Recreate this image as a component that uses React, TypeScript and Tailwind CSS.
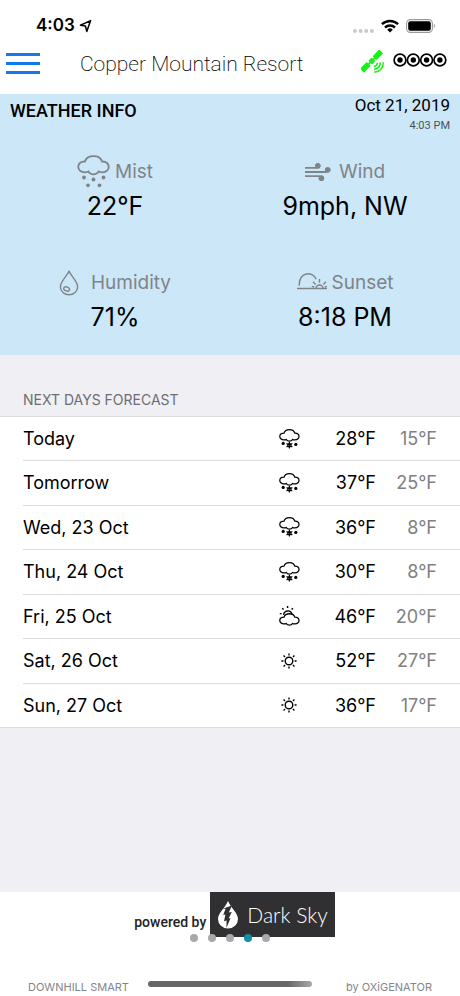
import type { ReactNode } from "react";

const CLOUD =
  "M8 6.5C10 -.6 23 -.6 25 6.5C34 6 34 17.4 25 17.3C23.5 17.3 22.5 17.2 21.5 16.6C19.5 20.2 13.5 20.2 11.5 16.6C10.5 17.2 9.5 17.3 8 17.3C-1 17.4 -1 6 8 6.5Z";

type Sky = "snow" | "partly" | "sun";

const forecast: { day: string; sky: Sky; high: number; low: number }[] = [
  { day: "Today", sky: "snow", high: 28, low: 15 },
  { day: "Tomorrow", sky: "snow", high: 37, low: 25 },
  { day: "Wed, 23 Oct", sky: "snow", high: 36, low: 8 },
  { day: "Thu, 24 Oct", sky: "snow", high: 30, low: 8 },
  { day: "Fri, 25 Oct", sky: "partly", high: 46, low: 20 },
  { day: "Sat, 26 Oct", sky: "sun", high: 52, low: 27 },
  { day: "Sun, 27 Oct", sky: "sun", high: 36, low: 17 },
];

function MistIcon() {
  return (
    <svg width="33" height="34" viewBox="0 0 33 34" fill="none">
      <path d={CLOUD} stroke="currentColor" strokeWidth="1.8" />
      <g fill="currentColor">
        <circle cx="7" cy="22.5" r="1.9" />
        <circle cx="16.5" cy="24.5" r="1.9" />
        <circle cx="26.5" cy="22.5" r="1.9" />
        <circle cx="11" cy="30.3" r="1.9" />
        <circle cx="22.5" cy="30.3" r="1.9" />
      </g>
    </svg>
  );
}

function WindIcon() {
  return (
    <svg width="29" height="18" viewBox="0 0 29 18" fill="none" stroke="currentColor" strokeWidth="1.8">
      <path d="M0 4.8H11.5Q14.5 4.8 14.8 2.5M0 9H20.5Q24.4 9 24.7 6.5M0 13.2H14.5Q17.8 13.2 18.3 15" />
      <g fill="currentColor" stroke="none">
        <circle cx="12.8" cy="2.8" r="2.8" />
        <circle cx="22.7" cy="6.7" r="2.8" />
        <circle cx="16.4" cy="15.2" r="2.8" />
      </g>
    </svg>
  );
}

function DropIcon() {
  return (
    <svg width="27" height="26" viewBox="0 0 27 26" fill="none" stroke="currentColor" strokeWidth="1.4">
      <path d="M10 1.4C7 7 1.4 11.5 1.4 16.8A8.6 8 0 0 0 18.6 16.8C18.6 11.5 13 7 10 1.4Z" />
      <ellipse cx="7.6" cy="19" rx="3" ry="1.9" transform="rotate(20 7.6 19)" />
    </svg>
  );
}

function SunsetIcon() {
  return (
    <svg width="30" height="20" viewBox="0 0 30 20" fill="none" stroke="currentColor" strokeWidth="1.4">
      <path d="M0 15.5H30M2.2 12.8C2 -1.8 15.5 -2 19.2 6.2" />
      <path d="M19 15.5a3.5 3.5 0 0 1 7 0M22.5 9.8V6M18.6 11.4L16 8.8M26.4 11.4L29 8.8M17.2 14L14.8 13.3M27.8 14L30 13.3" />
    </svg>
  );
}

function SkyIcon({ sky }: { sky: Sky }) {
  if (sky === "snow") {
    return (
      <svg className="mx-auto" width="21" height="20" viewBox="0 0 21 20" fill="none" stroke="currentColor" role="img" aria-label="Snow">
        <path d={CLOUD} transform="scale(.63)" strokeWidth="2" />
        <path d="M10.4 13V19.6M7.5 14.6L13.3 18M13.3 14.6L7.5 18" strokeWidth="1.2" />
        <circle cx="10.4" cy="16.3" r="1.7" strokeWidth="1.2" />
        <g fill="currentColor" stroke="none">
          <circle cx="4.2" cy="14.4" r="1.6" />
          <circle cx="16.8" cy="15.4" r="1.6" />
        </g>
      </svg>
    );
  }
  if (sky === "partly") {
    return (
      <svg className="mx-auto" width="21" height="20" viewBox="0 0 21 20" fill="none" stroke="currentColor" role="img" aria-label="Partly cloudy">
        <path d="M4.6 9A4.3 4.3 0 0 1 13 8" strokeWidth="1.3" />
        <path d="M8.6 0V2M3.2 2.2L4.6 3.6M14 2.2L12.6 3.6M.8 7.6H2.6" strokeWidth="1.4" />
        <path d={CLOUD} transform="translate(0 7) scale(.63)" strokeWidth="2.1" fill="white" />
      </svg>
    );
  }
  return (
    <svg className="mx-auto" width="16" height="16" viewBox="0 0 16 16" fill="none" stroke="currentColor" strokeWidth="1.4" role="img" aria-label="Sunny">
      <circle cx="8" cy="8" r="3.8" />
      <path d="M8 .4V2.4M8 13.6V15.6M.4 8H2.4M13.6 8H15.6M2.6 2.6L4 4M12 12L13.4 13.4M13.4 2.6L12 4M4 12L2.6 13.4" />
    </svg>
  );
}

function StatusBar() {
  return (
    <div className="flex h-[50px] items-center justify-between pt-[2px] pr-6 pl-9">
      <div className="flex items-center gap-1 text-[17px] font-semibold">
        4:03
        <svg width="13" height="14" viewBox="0 0 13 14" fill="none" stroke="currentColor" strokeWidth="1.5" strokeLinejoin="round">
          <path d="M11.6 1.6L1.4 6.2L6.4 7L7.8 12.4Z" />
        </svg>
      </div>
      <div className="flex items-center gap-[7px]">
        <svg width="21" height="14" viewBox="0 0 21 14" fill="#c9c9c9">
          <circle cx="2" cy="12" r="2" />
          <circle cx="7.6" cy="12" r="2" />
          <circle cx="13.2" cy="12" r="2" />
          <circle cx="18.8" cy="12" r="2" />
        </svg>
        <svg width="18" height="14" viewBox="0 0 18 14" fill="none" stroke="black" strokeWidth="2.5">
          <path d="M.9 5.2A11.8 11.8 0 0 1 17.1 5.2M4 8.5A7.3 7.3 0 0 1 14 8.5" />
          <path d="M9 13.5L6.2 10.7A4 4 0 0 1 11.8 10.7Z" fill="black" stroke="none" />
        </svg>
        <svg width="30" height="14" viewBox="0 0 30 14">
          <rect x=".6" y=".6" width="25.8" height="12.8" rx="3.8" fill="none" stroke="#9b9b9b" strokeWidth="1.1" />
          <rect x="2.2" y="2.2" width="22.6" height="9.6" rx="2" />
          <path d="M27.8 4.8Q30.4 7 27.8 9.2Z" fill="#9b9b9b" />
        </svg>
      </div>
    </div>
  );
}

function Header() {
  return (
    <header className="flex h-11 items-start pr-[13px] pl-1.5">
      <button type="button" aria-label="Menu" className="flex w-[34px] flex-col gap-[6px] pt-[3px]">
        <span className="h-[3px] w-full bg-[#1479ea]" />
        <span className="h-[3px] w-full bg-[#1479ea]" />
        <span className="h-[3px] w-full bg-[#1479ea]" />
      </button>
      <h1 className="flex-1 pl-10 font-[Roboto] text-[21px] leading-7 font-extralight whitespace-nowrap">Copper Mountain Resort</h1>
      <svg width="24" height="24" viewBox="0 0 24 24" className="mr-2" role="img" aria-label="GPS signal">
        <g fill="#12f512">
          <g transform="rotate(-45 11 11)">
            <rect x="-2.8" y="8" width="9.4" height="5.6" rx=".8" />
            <rect x="6" y="10" width="10" height="1.8" />
            <rect x="8.4" y="8.2" width="5" height="5.4" rx="1.6" />
            <rect x="14.8" y="8" width="9.4" height="5.6" rx=".8" />
          </g>
        </g>
        <g fill="none" stroke="#12f512" strokeWidth="1.5">
          <path d="M16.6 12.6Q16.2 16 12.8 16.4M19.4 12.4Q19 18.6 13 19.2M22.4 12.2Q22 21.4 13.2 22.2" />
        </g>
      </svg>
      <svg width="54" height="14" viewBox="0 0 54 14" className="mt-[3px]" role="img" aria-label="4 runs">
        {[7, 20.3, 33.6, 46.9].map((cx) => (
          <g key={cx}>
            <circle cx={cx} cy="7" r="5.9" fill="none" stroke="black" strokeWidth="1.7" />
            <circle cx={cx} cy="7" r="2.7" />
          </g>
        ))}
      </svg>
    </header>
  );
}

function Stat({ icon, label, value }: { icon: ReactNode; label: string; value: string }) {
  return (
    <div className="flex flex-col items-center">
      <dt className="flex h-9 items-center gap-[5px] text-[19px] text-[#808488]">
        {icon}
        {label}
      </dt>
      <dd className="text-[25px] leading-8">{value}</dd>
    </div>
  );
}

export default function App() {
  return (
    <div className="flex min-h-screen flex-col bg-white font-[Inter,sans-serif] text-black">
      <StatusBar />
      <Header />

      {/* Current conditions */}
      <section className="bg-[#cce7f8] pb-[22px]">
        <div className="flex justify-between px-2.5 font-[Roboto]">
          <h2 className="pt-[3px] text-[18px] leading-7 font-medium">WEATHER INFO</h2>
          <div className="text-right">
            <p className="text-[17px] leading-[22px]">Oct 21, 2019</p>
            <p className="pt-[2px] text-[11px] leading-4 text-[#4b5258]">4:03 PM</p>
          </div>
        </div>
        <dl className="grid grid-cols-2 gap-y-[43px] pt-5">
          <Stat icon={<MistIcon />} label="Mist" value="22°F" />
          <Stat icon={<WindIcon />} label="Wind" value="9mph, NW" />
          <Stat icon={<DropIcon />} label="Humidity" value="71%" />
          <Stat icon={<SunsetIcon />} label="Sunset" value="8:18 PM" />
        </dl>
      </section>

      {/* Forecast */}
      <section className="flex-1 bg-[#efeff4]">
        <h2 className="px-[23px] pt-9 pb-2 text-[14px] leading-[17px] text-[#6d6d72]">NEXT DAYS FORECAST</h2>
        <div className="border-y border-[#dcdce0] bg-white pl-[23px]">
          <table className="h-[310px] w-full text-[18px]">
            <tbody>
              {forecast.map((f) => (
                <tr key={f.day} className="border-b border-[#dcdce0] last:border-b-0">
                  <th scope="row" className="text-left font-normal">{f.day}</th>
                  <td className="w-[62px]">
                    <SkyIcon sky={f.sky} />
                  </td>
                  <td className="w-14 text-right">{f.high}°F</td>
                  <td className="w-[84px] pr-[23px] text-right text-[#808080]">{f.low}°F</td>
                </tr>
              ))}
            </tbody>
          </table>
        </div>
      </section>

      <footer>
        <div className="relative flex justify-center gap-1 pl-[9px]">
          <span className="pt-5 font-[Roboto] text-[14px] leading-5 font-medium text-[#222222]">powered by</span>
          <a href="#dark-sky" className="flex h-[45px] items-center gap-2 bg-[#303032] px-[7px] font-[Lato] text-[21px] font-light text-white">
            <svg width="22" height="30" viewBox="0 0 22 30">
              <path d="M11 1C8 8 1 13 1 19A10 9.6 0 0 0 21 19C21 13 14 8 11 1Z" fill="white" />
              <path d="M5 9L15 5.5L11.8 12.5L14.8 12L11.6 18.5L13.6 18L9.4 28L9.6 20.5L7 21.2L8.4 14.5L6.2 15L8.6 8.8Z" fill="#303032" />
            </svg>
            Dark Sky
          </a>
          <nav aria-label="Pages" className="absolute -bottom-[5px] flex gap-[10px] pr-[9px]">
            {[1, 2, 3, 4, 5].map((page) => (
              <button
                key={page}
                type="button"
                aria-label={`Page ${page}`}
                className={page === 4 ? "size-2 rounded-full bg-[#128fa5]" : "size-2 rounded-full bg-[#a9a9a9]"}
              />
            ))}
          </nav>
        </div>
        <div className="grid grid-cols-[1fr_auto_1fr] items-center px-7 pt-[42px] pb-px text-[11px] leading-4 text-[#85858a]">
          <span>DOWNHILL SMART</span>
          <div className="mb-[7px] h-[6px] w-[164px] rounded-full bg-linear-to-r from-[#666666] from-85% to-[#a8a8a8]" />
          <span className="text-right">by OXiGENATOR</span>
        </div>
      </footer>
    </div>
  );
}
